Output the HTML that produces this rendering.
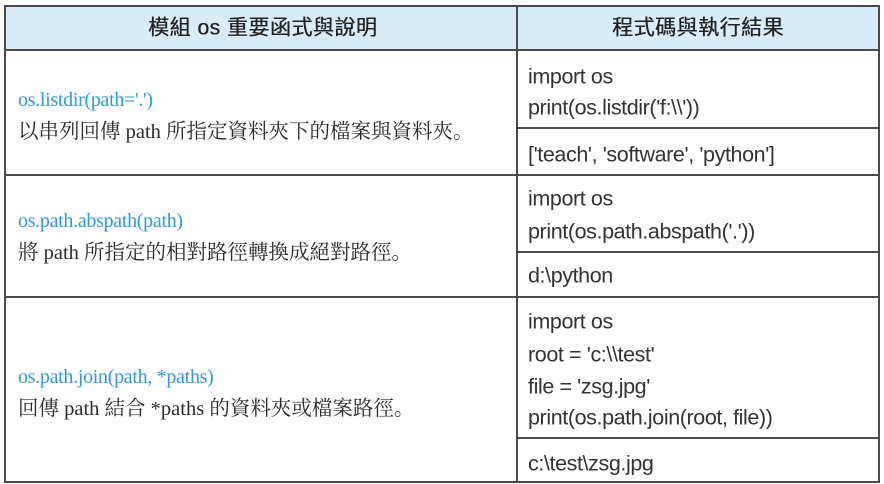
<!DOCTYPE html>
<html><head><meta charset="utf-8"><style>
body{margin:0;width:884px;height:484px;background:#fff;position:relative;overflow:hidden;font-family:"Liberation Sans","Noto Sans CJK TC",sans-serif;color:#2a2a2a}
.l{position:absolute;background:#4a4a4a}
.t{position:absolute;white-space:nowrap;line-height:1;transform:translateY(-50%)}
.c{font-size:21.5px;font-family:"Liberation Sans","Noto Sans CJK TC",sans-serif;letter-spacing:-0.4px;color:#333}
.s{font-family:"Liberation Serif","Noto Serif CJK SC","Noto Sans CJK TC",serif;font-size:20.5px}
.b{color:#2f9bd4;font-size:20px;letter-spacing:-0.3px}
.h{font-size:21px;color:#222;letter-spacing:0.5px;text-shadow:0.4px 0 0 #222}
</style></head><body>
<div style="position:absolute;left:5px;top:6px;width:875px;height:44px;background:#d9edf9"></div>
<div class="l" style="left:4px;top:5px;width:876px;height:2px"></div>
<div class="l" style="left:4px;top:49px;width:876px;height:2px"></div>
<div class="l" style="left:4px;top:174px;width:876px;height:2px"></div>
<div class="l" style="left:4px;top:296px;width:876px;height:2px"></div>
<div class="l" style="left:4px;top:481px;width:876px;height:2px"></div>
<div class="l" style="left:4px;top:5px;width:2px;height:478px"></div>
<div class="l" style="left:878px;top:5px;width:2px;height:478px"></div>
<div class="l" style="left:516px;top:5px;width:2px;height:478px"></div>
<div class="l" style="left:517px;top:127px;width:362px;height:1.5px"></div>
<div class="l" style="left:517px;top:251px;width:362px;height:1.5px"></div>
<div class="l" style="left:517px;top:437px;width:362px;height:1.5px"></div>
<div class="t h" style="left:148px;top:28px">模組 os 重要函式與說明</div>
<div class="t h" style="left:612px;top:28px">程式碼與執行結果</div>
<div class="t s b" style="left:18px;top:100px">os.listdir(path='.')</div>
<div class="t s" style="left:18px;top:132px">以串列回傳 path 所指定資料夾下的檔案與資料夾。</div>
<div class="t c" style="left:528px;top:77px">import os</div>
<div class="t c" style="left:528px;top:108px">print(os.listdir('f:\\'))</div>
<div class="t c" style="left:528px;top:155px">['teach', 'software', 'python']</div>
<div class="t s b" style="left:18px;top:221px">os.path.abspath(path)</div>
<div class="t s" style="left:18px;top:253px">將 path 所指定的相對路徑轉換成絕對路徑。</div>
<div class="t c" style="left:528px;top:199px">import os</div>
<div class="t c" style="left:528px;top:232px">print(os.path.abspath('.'))</div>
<div class="t c" style="left:528px;top:276px">d:\python</div>
<div class="t s b" style="left:18px;top:377px">os.path.join(path, *paths)</div>
<div class="t s" style="left:18px;top:409px">回傳 path 結合 *paths 的資料夾或檔案路徑。</div>
<div class="t c" style="left:528px;top:322px">import os</div>
<div class="t c" style="left:528px;top:355px">root = 'c:\\test'</div>
<div class="t c" style="left:528px;top:387px">file = 'zsg.jpg'</div>
<div class="t c" style="left:528px;top:418px">print(os.path.join(root, file))</div>
<div class="t c" style="left:528px;top:464px">c:\test\zsg.jpg</div>
</body></html>
